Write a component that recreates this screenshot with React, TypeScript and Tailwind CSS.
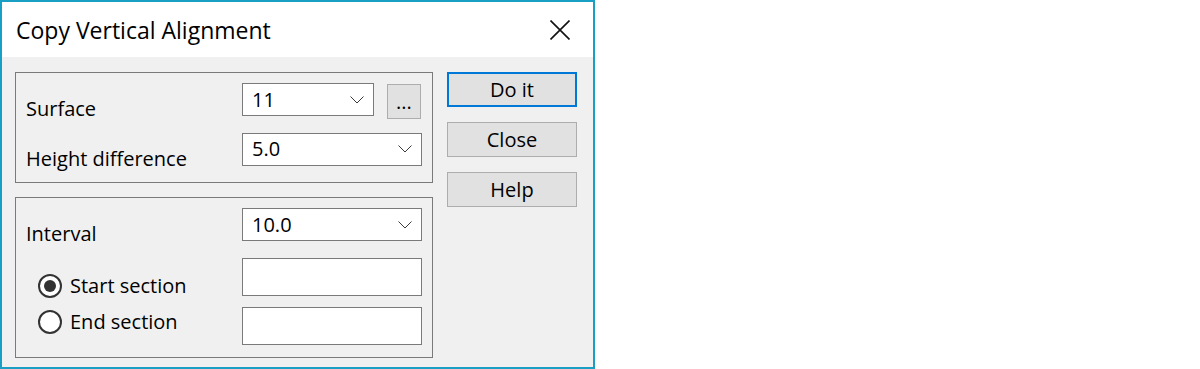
import React from 'react'

const font = { fontFamily: '"Open Sans", "Noto Sans", Arial, sans-serif' }

function Chevron() {
  return (
    <svg width="14" height="8" viewBox="0 0 14 8" className="shrink-0">
      <path d="M0.5 0.5 L7 7 L13.5 0.5" fill="none" stroke="#3a3a3a" strokeWidth="1" />
    </svg>
  )
}

function Combo({ value, width }: { value: string; width: string }) {
  return (
    <div className={`${width} h-[33px] bg-white border border-[#7a7a7a] flex items-center justify-between pl-[9px] pr-[9px]`}>
      <span className="leading-[24px]">{value}</span>
      <Chevron />
    </div>
  )
}

function Radio({ checked, label }: { checked?: boolean; label: string }) {
  return (
    <div className="flex items-center gap-[8px] pl-[12px]">
      <div className="w-[24px] h-[24px] rounded-full border-2 border-[#333333] bg-white flex items-center justify-center">
        {checked && <div className="w-[12px] h-[12px] rounded-full bg-[#333333]" />}
      </div>
      <span className="leading-[24px]">{label}</span>
    </div>
  )
}

function DlgButton({ label, primary }: { label: string; primary?: boolean }) {
  return (
    <button
      className={`w-[130px] h-[35px] bg-[#e1e1e1] flex items-center justify-center leading-[24px] ${
        primary ? 'border-2 border-[#0078d7]' : 'border border-[#adadad]'
      }`}
    >
      {label}
    </button>
  )
}

export default function App() {
  return (
    <div className="w-[1200px] h-[369px] bg-white text-[20px] text-black" style={font}>
      <div className="w-[595px] h-[369px] border-2 border-[#1a9fc4] flex flex-col">
        {/* title bar */}
        <div className="h-[55px] bg-white flex items-center justify-between pl-[14px] pr-[23px]">
          <span className="text-[23px] leading-[28px]">Copy Vertical Alignment</span>
          <svg width="20" height="20" viewBox="0 0 20 20">
            <path d="M0.5 0.5 L19.5 19.5 M19.5 0.5 L0.5 19.5" stroke="#111111" strokeWidth="1.6" />
          </svg>
        </div>

        {/* body */}
        <div className="flex-1 bg-[#f0f0f0] flex gap-[14px] pl-[13px] pt-[15px]">
          <div className="flex flex-col gap-[14px]">
            <div className="w-[418px] h-[111px] border border-[#7a7a7a] pl-[10px] pt-[10px] flex flex-col">
              <div className="h-[50px] flex items-start">
                <span className="w-[216px] mt-[14px] leading-[24px]">Surface</span>
                <Combo value="11" width="w-[132px]" />
                <div className="ml-[13px] mt-[1px] w-[34px] h-[35px] bg-[#e1e1e1] border border-[#adadad] flex items-center justify-center leading-[24px]">
                  ...
                </div>
              </div>
              <div className="h-[50px] flex items-start">
                <span className="w-[216px] mt-[14px] leading-[24px]">Height difference</span>
                <Combo value="5.0" width="w-[180px]" />
              </div>
            </div>

            <div className="w-[418px] h-[161px] border border-[#7a7a7a] pl-[10px] pt-[10px] flex flex-col">
              <div className="h-[50px] flex items-start">
                <span className="w-[216px] mt-[14px] leading-[24px]">Interval</span>
                <Combo value="10.0" width="w-[180px]" />
              </div>
              <div className="h-[50px] flex items-start">
                <div className="w-[216px] mt-[16px]">
                  <Radio checked label="Start section" />
                </div>
                <div className="w-[180px] h-[38px] bg-white border border-[#7a7a7a]" />
              </div>
              <div className="h-[50px] flex items-start">
                <div className="w-[216px] mt-[3px]">
                  <Radio label="End section" />
                </div>
                <div className="w-[180px] h-[38px] bg-white border border-[#7a7a7a]" />
              </div>
            </div>
          </div>

          <div className="flex flex-col gap-[15px]">
            <DlgButton label="Do it" primary />
            <DlgButton label="Close" />
            <DlgButton label="Help" />
          </div>
        </div>
      </div>
    </div>
  )
}
